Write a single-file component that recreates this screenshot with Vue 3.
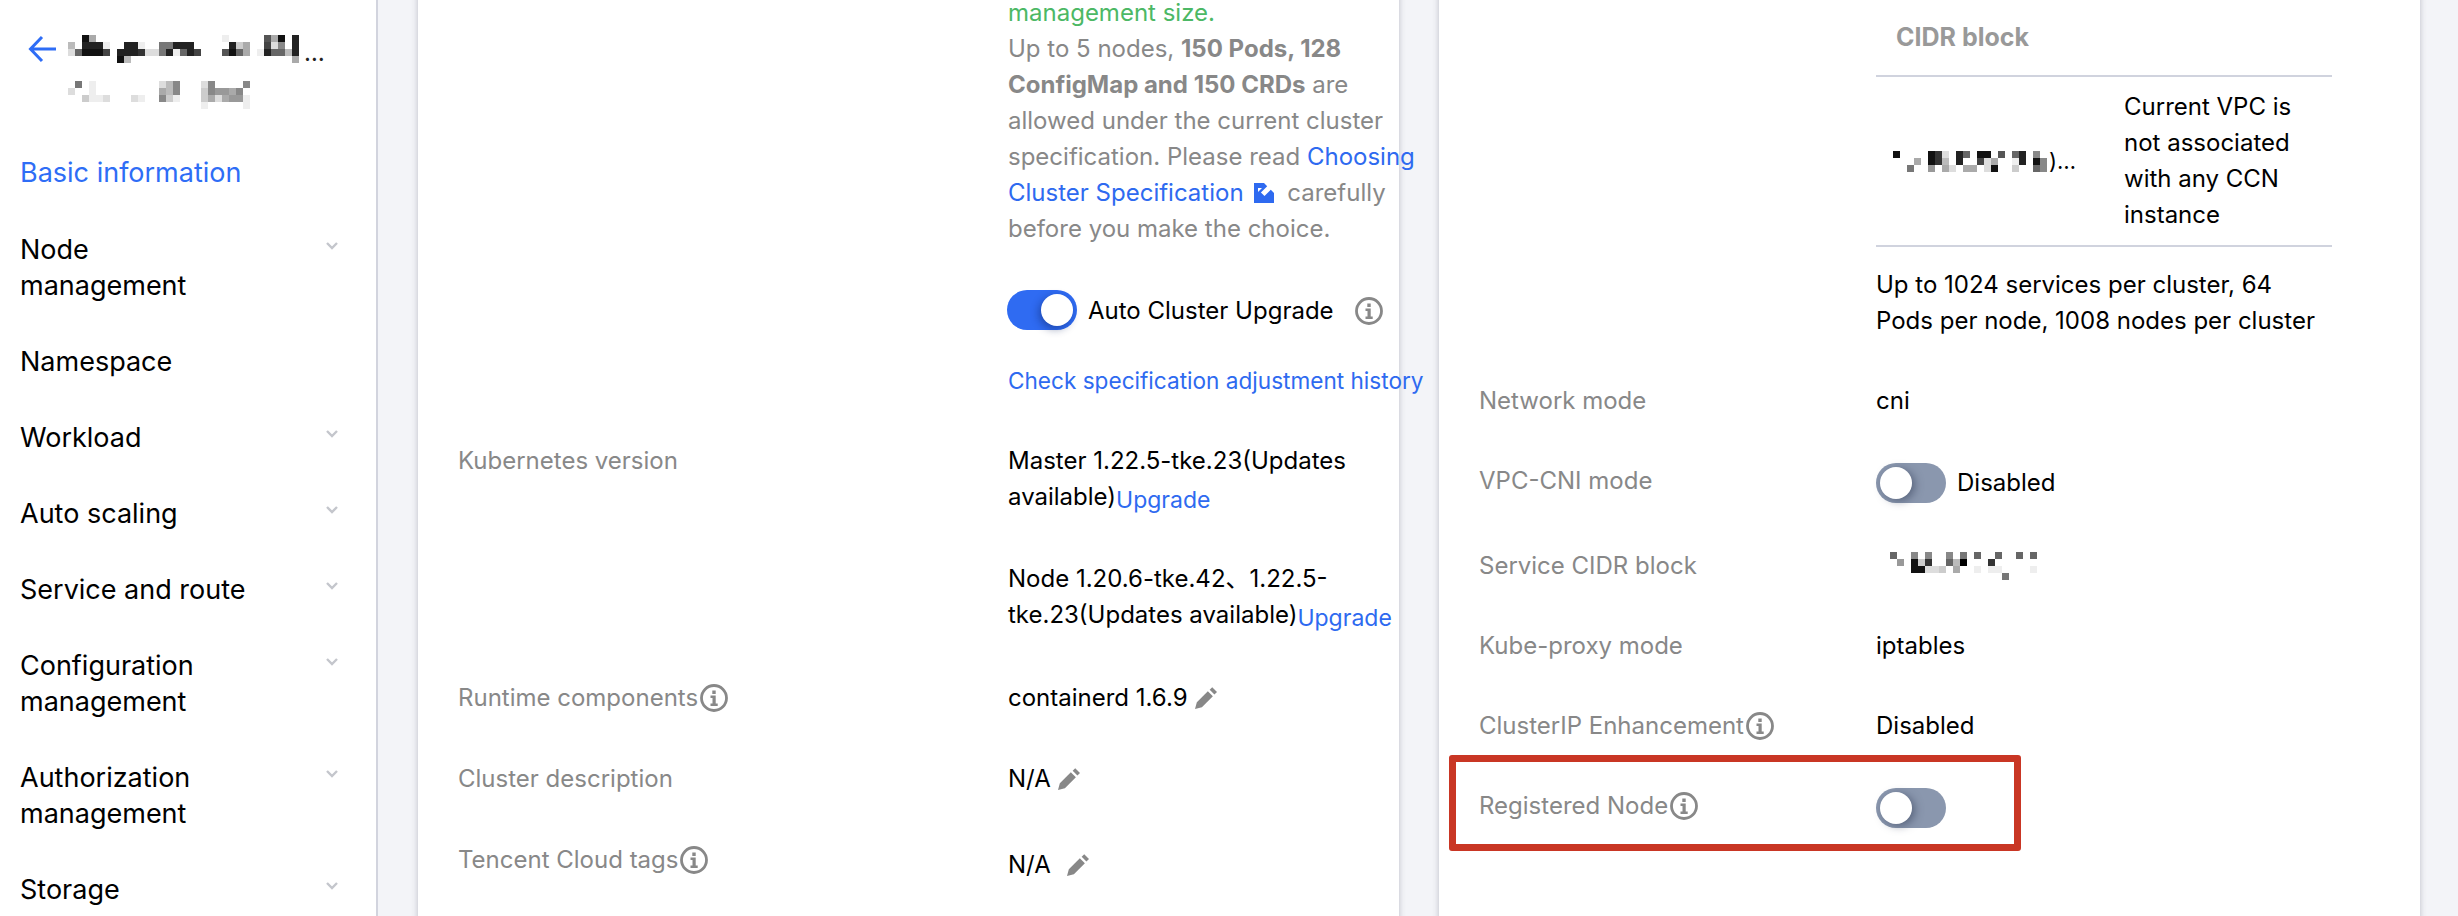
<script setup>
const hex = (s) => `#${s}${s}${s}`
function cells(rows) {
  const out = []
  rows.forEach((row, y) => {
    ;[...row].forEach((c, x) => {
      if (c !== '.') out.push({ x: x * 7, y: y * 7, fill: hex(c), key: `${x}-${y}` })
    })
  })
  return out
}
const titleCells = cells([
  '..1a..................e.....5a1.2',
  'b.222e..22e..77222..f.f2ca..4d8.2',
  'd61114.2223dd72e624...516a.e266b2',
  '.......1b.......................a'
])
const subCells = cells([
  '.7.e.........db8...d8....8',
  'd..e.........ab8...c899a8f',
  '.fceedf..de..8ce...cada99e',
  '...................e.....e'
])
const vpcCells = cells([
  '1.f..13d.26.11.5.62.8',
  '...a.13b.2..4da..e2.18',
  '..7..9.ad.aafd1..c..68'
])
const svcCells = cells([
  '6..8.8..8.7.6..6.f6.6',
  '.9.1c3..6b0.f.3',
  'f..11ddcfaf.e.ee..f.e',
  '................7'
])
const menu = [
  { label: 'Node management', chevron: true },
  { label: 'Namespace', chevron: false },
  { label: 'Workload', chevron: true },
  { label: 'Auto scaling', chevron: true },
  { label: 'Service and route', chevron: true },
  { label: 'Configuration management', chevron: true },
  { label: 'Authorization management', chevron: true },
  { label: 'Storage', chevron: true }
]
</script>

<template>
  <div class="page">
    <aside class="side">
      <header class="side-head">
        <svg class="back" viewBox="0 0 28 28" width="28" height="28"><path d="M28 14H3M14 2 2.500 14 14 26" fill="none" stroke="#2e6df6" stroke-width="3"/></svg>
        <div class="side-title">
          <div class="title-line">
            <svg width="231" height="28"><rect v-for="c in titleCells" :key="c.key" :x="c.x" :y="c.y" width="7" height="7" :fill="c.fill"/></svg>
            <span class="ell">…</span>
          </div>
          <svg class="sub" width="182" height="28"><rect v-for="c in subCells" :key="c.key" :x="c.x" :y="c.y" width="7" height="7" :fill="c.fill"/></svg>
        </div>
      </header>
      <nav class="nav">
        <div class="item active"><span class="item-text">Basic information</span></div>
        <div v-for="m in menu" :key="m.label" class="item">
          <span class="item-text">{{ m.label }}</span>
          <svg v-if="m.chevron" class="chev" viewBox="0 0 12 8" width="12" height="8"><path d="M1 1l5 5 5-5" fill="none" stroke="#c4c6cc" stroke-width="2.400"/></svg>
        </div>
      </nav>
    </aside>

    <main class="main">
      <section class="card left">
        <div class="row first">
          <div class="label"></div>
          <div class="value">
            <div class="green">management size.</div>
            <div class="gray">Up to 5 nodes, <b>150 Pods, 128 ConfigMap and 150 CRDs</b> are allowed under the current cluster specification. Please read <a>Choosing Cluster Specification<svg class="ext" viewBox="0 0 20 20" width="20" height="20"><path d="M0 0h20v20H0z" fill="#2e6af0"/><path d="M10 0h10v10l-3.200-3.200-6.300 6.300-3.600-3.600 6.300-6.300z" fill="#fff"/><path d="M4 5h4L4 9z" fill="#fff"/></svg></a> carefully before you make the choice.</div>
            <div class="auto">
              <span class="toggle on"><i></i></span>
              <span class="auto-label">Auto Cluster Upgrade</span>
              <svg class="info auto-info" viewBox="0 0 28 28" width="28" height="28"><circle cx="14" cy="14" r="12.500" fill="none" stroke="#888" stroke-width="2.800"/><path d="M12.300 6.500h3.400v3.400h-3.400zM10.500 11.500h5.200v8h2v2.500h-7.200v-2.500h2v-5.500h-2z" fill="#888"/></svg>
            </div>
            <a class="history">Check specification adjustment history</a>
          </div>
        </div>
        <div class="row">
          <div class="label">Kubernetes version</div>
          <div class="value">
            <div>Master 1.22.5-tke.23(Updates available)<a class="up">Upgrade</a></div>
            <div class="node-ver">Node 1.20.6-tke.42、1.22.5-tke.23(Updates available)<a class="up">Upgrade</a></div>
          </div>
        </div>
        <div class="row runtime">
          <div class="label">Runtime components<svg class="info" viewBox="0 0 28 28" width="28" height="28"><circle cx="14" cy="14" r="12.500" fill="none" stroke="#888" stroke-width="2.800"/><path d="M12.300 6.500h3.400v3.400h-3.400zM10.500 11.500h5.200v8h2v2.500h-7.200v-2.500h2v-5.500h-2z" fill="#888"/></svg></div>
          <div class="value">containerd 1.6.9<svg class="pen" viewBox="0 0 24 24" width="22" height="22"><path d="M0 24l2-7.500L14 4.500l5.500 5.500L7.500 22zM16 3l2.800-2.800 5.200 5.200L21.200 8.200z" fill="#888"/></svg></div>
        </div>
        <div class="row desc">
          <div class="label">Cluster description</div>
          <div class="value">N/A<svg class="pen" viewBox="0 0 24 24" width="22" height="22"><path d="M0 24l2-7.500L14 4.500l5.500 5.500L7.500 22zM16 3l2.800-2.800 5.200 5.200L21.200 8.200z" fill="#888"/></svg></div>
        </div>
        <div class="row desc">
          <div class="label">Tencent Cloud tags<svg class="info" viewBox="0 0 28 28" width="28" height="28"><circle cx="14" cy="14" r="12.500" fill="none" stroke="#888" stroke-width="2.800"/><path d="M12.300 6.500h3.400v3.400h-3.400zM10.500 11.500h5.200v8h2v2.500h-7.200v-2.500h2v-5.500h-2z" fill="#888"/></svg></div>
          <div class="value low">N/A<svg class="pen wide" viewBox="0 0 24 24" width="22" height="22"><path d="M0 24l2-7.500L14 4.500l5.500 5.500L7.500 22zM16 3l2.800-2.800 5.200 5.200L21.200 8.200z" fill="#888"/></svg></div>
        </div>
      </section>

      <section class="card right">
        <div class="rrow first">
          <div class="label"></div>
          <div class="value">
            <div class="cidr-table">
              <div class="th">CIDR block</div>
              <div class="tr">
                <div class="td-a">
                  <svg width="154" height="21"><rect v-for="c in vpcCells" :key="c.key" :x="c.x" :y="c.y" width="7" height="7" :fill="c.fill"/></svg>
                  <span class="cut">)…</span>
                </div>
                <div class="td-b">Current VPC is not associated with any CCN instance</div>
              </div>
            </div>
            <div class="limits">Up to 1024 services per cluster, 64 Pods per node, 1008 nodes per cluster</div>
          </div>
        </div>
        <div class="rrow">
          <div class="label">Network mode</div>
          <div class="value">cni</div>
        </div>
        <div class="rrow">
          <div class="label">VPC-CNI mode</div>
          <div class="value flexv"><span class="toggle"><i></i></span><span class="state">Disabled</span></div>
        </div>
        <div class="rrow svc-row">
          <div class="label">Service CIDR block</div>
          <div class="value"><svg class="svc" width="147" height="28"><rect v-for="c in svcCells" :key="c.key" :x="c.x" :y="c.y" width="7" height="7" :fill="c.fill"/></svg></div>
        </div>
        <div class="rrow">
          <div class="label">Kube-proxy mode</div>
          <div class="value">iptables</div>
        </div>
        <div class="rrow">
          <div class="label">ClusterIP Enhancement<svg class="info" viewBox="0 0 28 28" width="28" height="28"><circle cx="14" cy="14" r="12.500" fill="none" stroke="#888" stroke-width="2.800"/><path d="M12.300 6.500h3.400v3.400h-3.400zM10.500 11.500h5.200v8h2v2.500h-7.200v-2.500h2v-5.500h-2z" fill="#888"/></svg></div>
          <div class="value">Disabled</div>
        </div>
        <div class="rrow registered">
          <div class="label">Registered Node<svg class="info" viewBox="0 0 28 28" width="28" height="28"><circle cx="14" cy="14" r="12.500" fill="none" stroke="#888" stroke-width="2.800"/><path d="M12.300 6.500h3.400v3.400h-3.400zM10.500 11.500h5.200v8h2v2.500h-7.200v-2.500h2v-5.500h-2z" fill="#888"/></svg></div>
          <div class="value flexv"><span class="toggle"><i></i></span></div>
          <div class="red-box"></div>
        </div>
      </section>
    </main>
  </div>
</template>

<style>
html, body { margin: 0; background: #f3f4f8; }
</style>

<style scoped>
.page {
  display: flex;
  height: 916px;
  overflow: hidden;
  font-family: Inter, "Liberation Sans", "Noto Sans CJK SC", sans-serif;
  font-size: 24px;
  line-height: 36px;
  color: #000;
  background: #f3f4f8;
}
.side {
  flex: none;
  box-sizing: border-box;
  width: 378px;
  background: #fff;
  border-right: 2px solid #d2d4de;
  font-size: 27px;
}
.side-head {
  display: flex;
  box-sizing: border-box;
  height: 135px;
  padding: 35px 0 0 28px;
}
.back { flex: none; margin-right: 12px; }
.title-line { display: flex; height: 28px; }
.ell { margin-left: 5px; line-height: 36px; font-size: 24px; color: #222; }
.sub { display: block; margin-top: 18px; }
.item {
  display: flex;
  justify-content: space-between;
  padding: 20px 38px 20px 20px;
}
.item.active { padding-bottom: 21px; }
.item-text { width: 235px; }
.chev { margin-top: 10px; }
.active { color: #2e6df6; }
.main {
  flex: 1;
  display: flex;
  gap: 40px;
  padding: 0 38px 0 40px;
  min-width: 0;
}
.card {
  flex: 1;
  min-width: 0;
  height: 1000px;
  margin-top: -20px;
  padding-top: 15px;
  box-sizing: border-box;
  background: #fff;
  box-shadow: 0 2px 6px rgba(54, 58, 80, 0.3);
}
.row {
  display: grid;
  grid-template-columns: 550px 410px;
  padding-left: 40px;
  margin-top: 44px;
}
.row.first { margin-top: 0; }
.row.runtime { margin-top: 47px; }
.row.desc { margin-top: 45px; }
.label { color: #888; display: flex; align-items: center; height: 36px; }
.info { flex: none; margin-left: 2px; }
.value { min-width: 0; }
.green { color: #4cb865; }
.gray { color: #888; }
a { color: #2e6af0; }
.ext { display: inline-block; vertical-align: -2px; margin: 0 7px 0 10px; }
.auto { display: flex; align-items: center; height: 40px; margin-top: 43px; margin-left: -1px; }
.auto-label { margin-left: 11px; padding-top: 1px; }
.auto-info { margin-left: 21px; margin-top: 2px; }
.history { display: block; margin-top: 33px; white-space: nowrap; font-size: 22.6px; }
.up { display: inline-block; transform: translateY(3px); font-size: 23px; }
.node-ver { margin-top: 46px; }
.pen { vertical-align: -3px; margin-left: 7px; }
.pen.wide { margin-left: 16px; }
.low { padding-top: 5px; }
.toggle {
  flex: none;
  display: flex;
  box-sizing: border-box;
  width: 70px;
  height: 40px;
  padding: 4px;
  border-radius: 20px;
  background: #8a97ae;
}
.toggle i {
  width: 32px;
  height: 32px;
  border-radius: 50%;
  background: #fff;
  box-shadow: 3px 2px 8px rgba(50, 60, 85, 0.55);
}
.toggle.on { justify-content: flex-end; background: #2f6bf2; }
.toggle.on i { box-shadow: -2px 3px 8px rgba(10, 30, 90, 0.45); }
.rrow {
  position: relative;
  display: grid;
  grid-template-columns: 397px 456px;
  padding-left: 40px;
  margin-top: 44px;
}
.rrow.first { margin-top: 0; margin-bottom: 1px; }
.rrow.svc-row { margin-top: 45px; }
.th {
  padding: 24px 0 20px 20px;
  font-size: 25px;
  font-weight: 700;
  color: #999;
  border-bottom: 2px solid #d0d3de;
}
.tr {
  display: flex;
  align-items: center;
  padding: 12px 0;
  border-bottom: 2px solid #d0d3de;
}
.td-a {
  flex: none;
  display: flex;
  align-items: center;
  width: 248px;
  box-sizing: border-box;
  padding-left: 17px;
}
.cut { font-size: 22px; margin-left: 2px; }
.td-b { flex: 1; }
.limits { margin-top: 20px; }
.flexv { display: flex; }
.state { margin-left: 11px; margin-top: 2px; }
.svc { display: block; margin: 4px 0 0 14px; }
.red-box {
  position: absolute;
  left: 10px;
  top: -33px;
  width: 572px;
  height: 96px;
  box-sizing: border-box;
  border: 7px solid #c93624;
  border-radius: 3px;
}
</style>
